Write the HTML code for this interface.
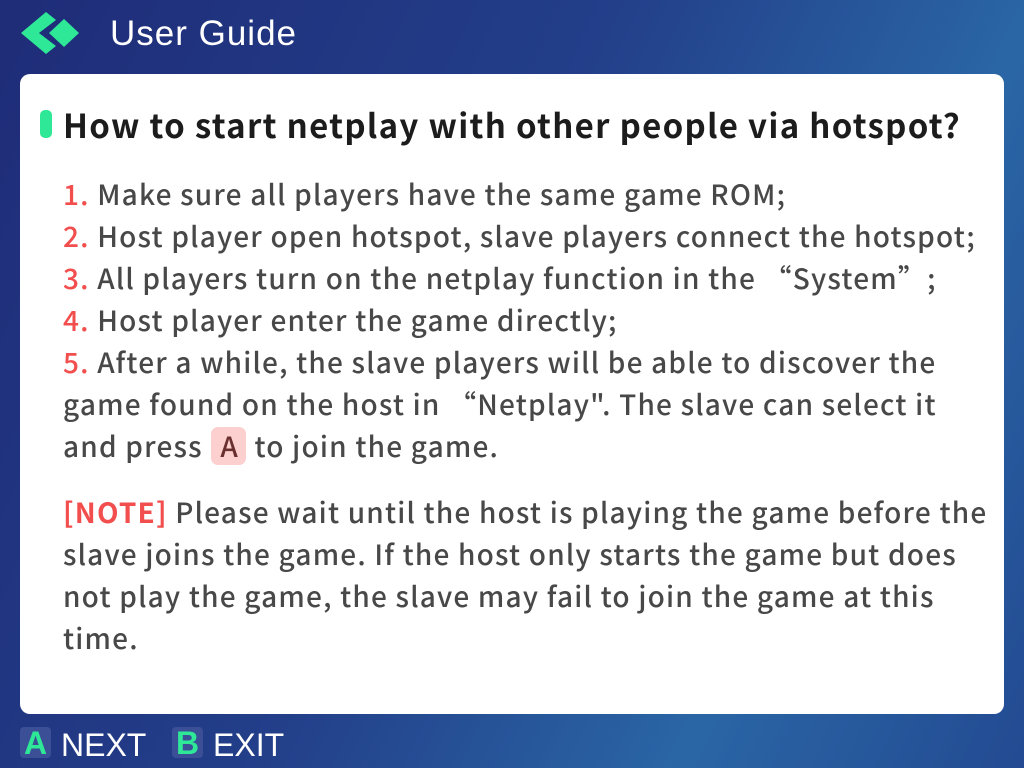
<!DOCTYPE html>
<html><head><meta charset="utf-8"><style>
html,body{margin:0;padding:0;}
body{width:1024px;height:768px;overflow:hidden;position:relative;
background:linear-gradient(115deg,#1f2c78 0%,#233f8a 45%,#2a66a6 75%,#234a92 100%);
font-family:"Noto Sans CJK SC","Liberation Sans",sans-serif;}
.hdr{position:absolute;left:110px;top:14px;font-family:"Liberation Sans",sans-serif;font-size:35px;color:#fff;letter-spacing:1px;}
.card{position:absolute;left:20px;top:74px;width:984px;height:640px;background:#fff;border-radius:10px;}
.bar{position:absolute;left:20px;top:36px;width:12px;height:28px;border-radius:5px;background:#2ee897;}
.title{position:absolute;left:43px;top:25px;font-size:33px;font-weight:bold;color:#1c1c1c;white-space:nowrap;line-height:50px;letter-spacing:1.3px;}
.body{position:absolute;left:43px;top:99px;width:960px;font-size:28px;line-height:42px;color:#484848;letter-spacing:1.2px;font-weight:500;}
.body p{margin:0;white-space:nowrap;}
.n{color:#f24e4e;}
.key{display:inline-block;background:#fdd0d0;color:#6a3030;border-radius:7px;padding:0 7px 0 9px;line-height:38px;margin:0 1px;}
.note{margin-top:24px !important;}
.foot{position:absolute;top:727px;font-family:"Liberation Sans",sans-serif;font-size:32px;color:#fff;}
.btn{display:inline-block;width:31px;height:31px;border-radius:4px;background:#3a4f95;color:#2ee897;font-weight:bold;text-align:center;line-height:32px;vertical-align:top;margin-right:10px;}
</style></head><body>
<svg style="position:absolute;left:18px;top:10px" width="64" height="48" viewBox="0 0 64 48">
<polygon points="3,23 28,2 38,10 21,23 38,36 28,44" fill="#2ee897"/>
<polygon points="46,9 61,23 46,37 31,23" fill="#2ee897"/>
</svg>
<div class="hdr">User Guide</div>
<div class="card">
<div class="bar"></div>
<div class="title">How to start netplay with other people via hotspot?</div>
<div class="body">
<p><span class="n">1.</span> Make sure all players have the same game ROM;</p>
<p><span class="n">2.</span> Host player open hotspot, slave players connect the hotspot;</p>
<p><span class="n">3.</span> All players turn on the netplay function in the “System”;</p>
<p><span class="n">4.</span> Host player enter the game directly;</p>
<p><span class="n">5.</span> After a while, the slave players will be able to discover the</p>
<p>game found on the host in “Netplay". The slave can select it</p>
<p>and press <span class="key">A</span> to join the game.</p>
<p class="note"><span class="n" style="font-weight:bold">[NOTE]</span> Please wait until the host is playing the game before the</p>
<p>slave joins the game. If the host only starts the game but does</p>
<p>not play the game, the slave may fail to join the game at this</p>
<p>time.</p>
</div>
</div>
<div class="foot" style="left:20px"><span class="btn">A</span>NEXT</div>
<div class="foot" style="left:172px"><span class="btn">B</span>EXIT</div>
</body></html>
